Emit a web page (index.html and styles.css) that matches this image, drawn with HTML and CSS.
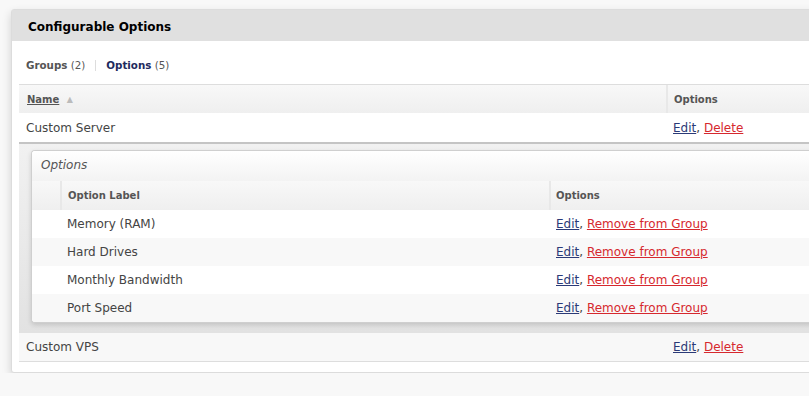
FILE: index.html
```html
<!DOCTYPE html>
<html lang="en">
<head>
    <meta charset="UTF-8">
    <title>Configurable Options</title>
    <link rel="stylesheet" href="styles.css">
</head>
<body>
    <div class="panel">
        <div class="panel-head">Configurable Options</div>
        <div class="panel-body">
            <div class="tabs">
                <span class="tab"><b>Groups</b> (2)</span>
                <span class="sep"></span>
                <span class="tab active"><b>Options</b> (5)</span>
            </div>

            <table class="grid outer">
                <thead>
                    <tr>
                        <th class="col-name"><a href="#" class="sort">Name</a> <span class="arrow">&#9650;</span></th>
                        <th>Options</th>
                    </tr>
                </thead>
                <tbody>
                    <tr class="open">
                        <td>Custom Server</td>
                        <td><a href="#" class="edit">Edit</a>, <a href="#" class="del">Delete</a></td>
                    </tr>
                    <tr class="sub">
                        <td colspan="2">
                            <div class="subbox">
                                <div class="subbox-head">Options</div>
                                <table class="grid inner">
                                    <thead>
                                        <tr>
                                            <th class="col-handle"></th>
                                            <th class="col-label">Option Label</th>
                                            <th>Options</th>
                                        </tr>
                                    </thead>
                                    <tbody>
                                        <tr>
                                            <td></td>
                                            <td>Memory (RAM)</td>
                                            <td><a href="#" class="edit">Edit</a>, <a href="#" class="del">Remove from Group</a></td>
                                        </tr>
                                        <tr class="alt">
                                            <td></td>
                                            <td>Hard Drives</td>
                                            <td><a href="#" class="edit">Edit</a>, <a href="#" class="del">Remove from Group</a></td>
                                        </tr>
                                        <tr>
                                            <td></td>
                                            <td>Monthly Bandwidth</td>
                                            <td><a href="#" class="edit">Edit</a>, <a href="#" class="del">Remove from Group</a></td>
                                        </tr>
                                        <tr class="alt">
                                            <td></td>
                                            <td>Port Speed</td>
                                            <td><a href="#" class="edit">Edit</a>, <a href="#" class="del">Remove from Group</a></td>
                                        </tr>
                                    </tbody>
                                </table>
                            </div>
                        </td>
                    </tr>
                    <tr class="alt last">
                        <td>Custom VPS</td>
                        <td><a href="#" class="edit">Edit</a>, <a href="#" class="del">Delete</a></td>
                    </tr>
                </tbody>
            </table>
        </div>
    </div>
</body>
</html>
```

FILE: styles.css
```css
html, body {
    margin: 0;
    overflow: hidden;
}

body {
    font-family: "DejaVu Sans", Verdana, sans-serif;
    font-size: 12px;
    color: #444;
    background: #f8f8f8;
    padding: 9px 0 0 11px;
}

.panel {
    width: 880px;
    background: #fff;
    border: 1px solid #dcdcdc;
    border-radius: 3px;
    box-shadow: 0 4px 10px rgba(0, 0, 0, 0.16);
}

.panel-head {
    background: #e0e0e0;
    height: 31px;
    line-height: 35px;
    overflow: hidden;
    padding-left: 16px;
    font-weight: bold;
    font-size: 12px;
    color: #000;
}

.panel-body {
    padding: 0 0 10px 7px;
}

.tabs {
    display: flex;
    align-items: center;
    height: 38px;
    padding: 5px 0 0 7px;
    font-size: 10.3px;
    color: #555;
}

.tab b {
    color: #555;
}

.tab.active b {
    color: #1f2b5e;
}

.sep {
    width: 1px;
    height: 11px;
    background: #ddd;
    margin: 0 10px;
}

.grid {
    width: 100%;
    border-collapse: separate;
    border-spacing: 0;
    table-layout: fixed;
}

.grid th,
.grid td {
    box-sizing: border-box;
}

.outer {
    border-top: 1px solid #ddd;
}

.grid th {
    height: 28px;
    padding: 0 0 0 8px;
    text-align: left;
    font-size: 10px;
    font-weight: bold;
    color: #555;
    background: linear-gradient(#f8f8f8, #efefef);
    box-shadow: inset 2px 0 #e8e8e8;
}

.grid th:first-child {
    box-shadow: none;
}

.col-name {
    width: 647px;
}

.sort {
    color: #555;
    text-decoration: underline;
}

.arrow {
    color: #bbb;
    font-size: 8px;
    margin-left: 4px;
    vertical-align: 1px;
}

.grid td {
    height: 29px;
    padding: 0 7px;
    font-size: 12px;
    color: #444;
    background: #fff;
}

.grid tr.alt > td {
    background: #f8f8f8;
}

.outer > tbody > tr.open > td {
    height: 31px;
    border-bottom: 2px solid #c4c4c4;
}

.outer > tbody > tr.last > td {
    border-bottom: 1px solid #ddd;
}

.grid td a {
    text-decoration: underline;
}

.edit {
    color: #2b3a77;
}

.del {
    color: #d6282e;
}

.outer > tbody > tr.sub > td {
    padding: 6px 0 10px 12px;
    background: linear-gradient(#f1f1f1, #e2e2e2);
}

.subbox {
    background: #fff;
    border: 1px solid #cfcfcf;
    border-right: none;
    border-radius: 4px 0 0 4px;
    box-shadow: 0 2px 5px rgba(0, 0, 0, 0.14);
    overflow: hidden;
}

.subbox-head {
    height: 30px;
    line-height: 28px;
    padding-left: 9px;
    font-style: italic;
    font-size: 12px;
    color: #555;
    background: linear-gradient(#fff, #f3f3f3);
}

.inner th {
    height: 29px;
}

.inner .col-handle {
    width: 28px;
}

.inner .col-label {
    width: 489px;
}

.inner th:nth-child(3) {
    padding-left: 7px;
}

.inner td {
    height: 28px;
}

.inner td:first-child {
    padding: 0;
}
```
